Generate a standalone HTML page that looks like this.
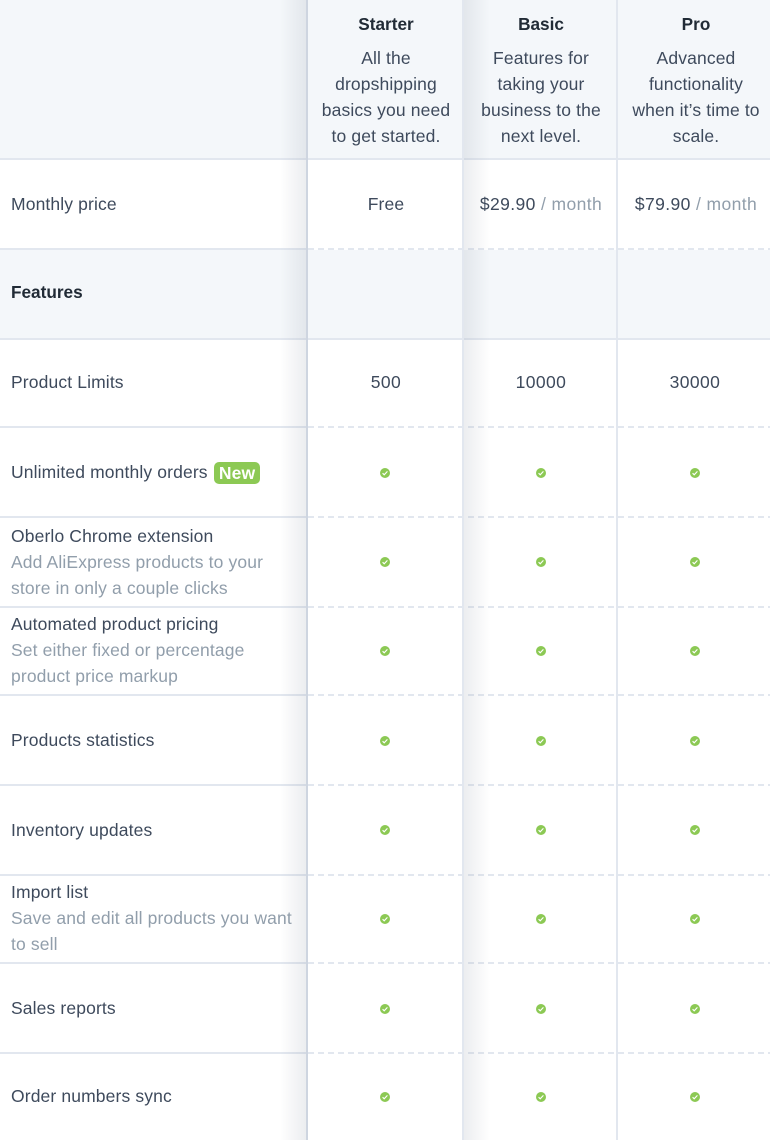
<!DOCTYPE html>
<html><head><meta charset="utf-8">
<style>
html,body{margin:0;padding:0;background:#fff}
#p{position:relative;width:770px;height:1140px;overflow:hidden;background:#fff;font-family:"Liberation Sans",sans-serif;font-size:17.5px;letter-spacing:.13px;color:#3e4a5c}
.bg{position:absolute;background:#f4f7fa}
.h{position:absolute;height:2px;left:0;width:308px;background:#e2e7ef}
.d{position:absolute;height:2px;left:308px;width:462px;background:repeating-linear-gradient(90deg,#e2e7ef 0 6px,transparent 6px 10px)}
.v{position:absolute;top:0;height:1140px}
.t{position:absolute;white-space:nowrap;line-height:26px}
.c{position:absolute;white-space:nowrap;line-height:26px;text-align:center}
.n{letter-spacing:.4px}
.g{color:#919eab}
b{color:#212b36;letter-spacing:0;font-size:17.2px}
svg{position:absolute}
</style></head><body><div id="p">
<div class="bg" style="left:0;top:0;width:770px;height:159px"></div>
<div class="bg" style="left:0;top:250px;width:770px;height:89px"></div>

<div class="h" style="top:158px;width:770px"></div>
<div class="h" style="top:248px"></div><div class="d" style="top:248px"></div>
<div class="h" style="top:338px;width:770px"></div>
<div class="h" style="top:426px"></div><div class="d" style="top:426px"></div>
<div class="h" style="top:516px"></div><div class="d" style="top:516px"></div>
<div class="h" style="top:606px"></div><div class="d" style="top:606px"></div>
<div class="h" style="top:694px"></div><div class="d" style="top:694px"></div>
<div class="h" style="top:784px"></div><div class="d" style="top:784px"></div>
<div class="h" style="top:874px"></div><div class="d" style="top:874px"></div>
<div class="h" style="top:962px"></div><div class="d" style="top:962px"></div>
<div class="h" style="top:1052px"></div><div class="d" style="top:1052px"></div>

<div class="v" style="left:280px;width:26px;background:linear-gradient(90deg,rgba(140,150,165,0),rgba(140,150,165,.17))"></div>
<div class="v" style="left:464px;width:26px;background:linear-gradient(270deg,rgba(140,150,165,0),rgba(140,150,165,.17))"></div>
<div class="v" style="left:306px;width:2px;background:#ced5e0"></div>
<div class="v" style="left:462px;width:2px;background:#e2e7ef"></div>
<div class="v" style="left:616px;width:2px;background:#e2e7ef"></div>

<div class="c" style="left:309px;width:154px;top:11px"><b>Starter</b></div>
<div class="c" style="left:465px;width:152px;top:11px"><b>Basic</b></div>
<div class="c" style="left:619px;width:154px;top:11px"><b>Pro</b></div>
<div class="c" style="left:309px;width:154px;top:45px">All the<br>dropshipping<br>basics you need<br>to get started.</div>
<div class="c" style="left:465px;width:152px;top:45px">Features for<br>taking your<br>business to the<br>next level.</div>
<div class="c" style="left:619px;width:154px;top:45px">Advanced<br>functionality<br>when it’s time to<br>scale.</div>

<div class="t" style="left:11px;top:191px">Monthly price</div>
<div class="c" style="left:309px;width:154px;top:191px">Free</div>
<div class="c n" style="left:465px;width:152px;top:191px">$29.90 <span class="g">/ month</span></div>
<div class="c n" style="left:619px;width:154px;top:191px">$79.90 <span class="g">/ month</span></div>
<div class="t" style="left:11px;top:279px"><b>Features</b></div>
<div class="t" style="left:11px;top:369px">Product Limits</div>
<div class="c n" style="left:309px;width:154px;top:369px">500</div>
<div class="c n" style="left:465px;width:152px;top:369px">10000</div>
<div class="c n" style="left:618px;width:154px;top:369px">30000</div>
<div class="t" style="left:11px;top:459px">Unlimited monthly orders</div>
<div style="position:absolute;left:214px;top:462px;width:46px;height:22px;border-radius:5px;background:#8cc954;color:#fff;font-weight:700;line-height:22px;text-align:center">New</div>
<div class="t" style="left:11px;top:523px">Oberlo Chrome extension<br><span class="g">Add AliExpress products to your<br>store in only a couple clicks</span></div>
<div class="t" style="left:11px;top:611px">Automated product pricing<br><span class="g">Set either fixed or percentage<br>product price markup</span></div>
<div class="t" style="left:11px;top:727px">Products statistics</div>
<div class="t" style="left:11px;top:817px">Inventory updates</div>
<div class="t" style="left:11px;top:879px">Import list<br><span class="g">Save and edit all products you want<br>to sell</span></div>
<div class="t" style="left:11px;top:995px">Sales reports</div>
<div class="t" style="left:11px;top:1083px">Order numbers sync</div>

<svg width="770" height="1140" style="left:0;top:0" viewBox="0 0 770 1140">
<defs><g id="k"><circle r="5" fill="#8cc954"/><path d="M-2.4 .2 -.8 1.8 2.4 -1.6" fill="none" stroke="#fff" stroke-width="1.1"/></g></defs>
<use href="#k" x="385" y="473"/><use href="#k" x="541" y="473"/><use href="#k" x="695" y="473"/>
<use href="#k" x="385" y="562"/><use href="#k" x="541" y="562"/><use href="#k" x="695" y="562"/>
<use href="#k" x="385" y="651"/><use href="#k" x="541" y="651"/><use href="#k" x="695" y="651"/>
<use href="#k" x="385" y="741"/><use href="#k" x="541" y="741"/><use href="#k" x="695" y="741"/>
<use href="#k" x="385" y="830"/><use href="#k" x="541" y="830"/><use href="#k" x="695" y="830"/>
<use href="#k" x="385" y="919"/><use href="#k" x="541" y="919"/><use href="#k" x="695" y="919"/>
<use href="#k" x="385" y="1009"/><use href="#k" x="541" y="1009"/><use href="#k" x="695" y="1009"/>
<use href="#k" x="385" y="1097"/><use href="#k" x="541" y="1097"/><use href="#k" x="695" y="1097"/>
</svg>
</div></body></html>
